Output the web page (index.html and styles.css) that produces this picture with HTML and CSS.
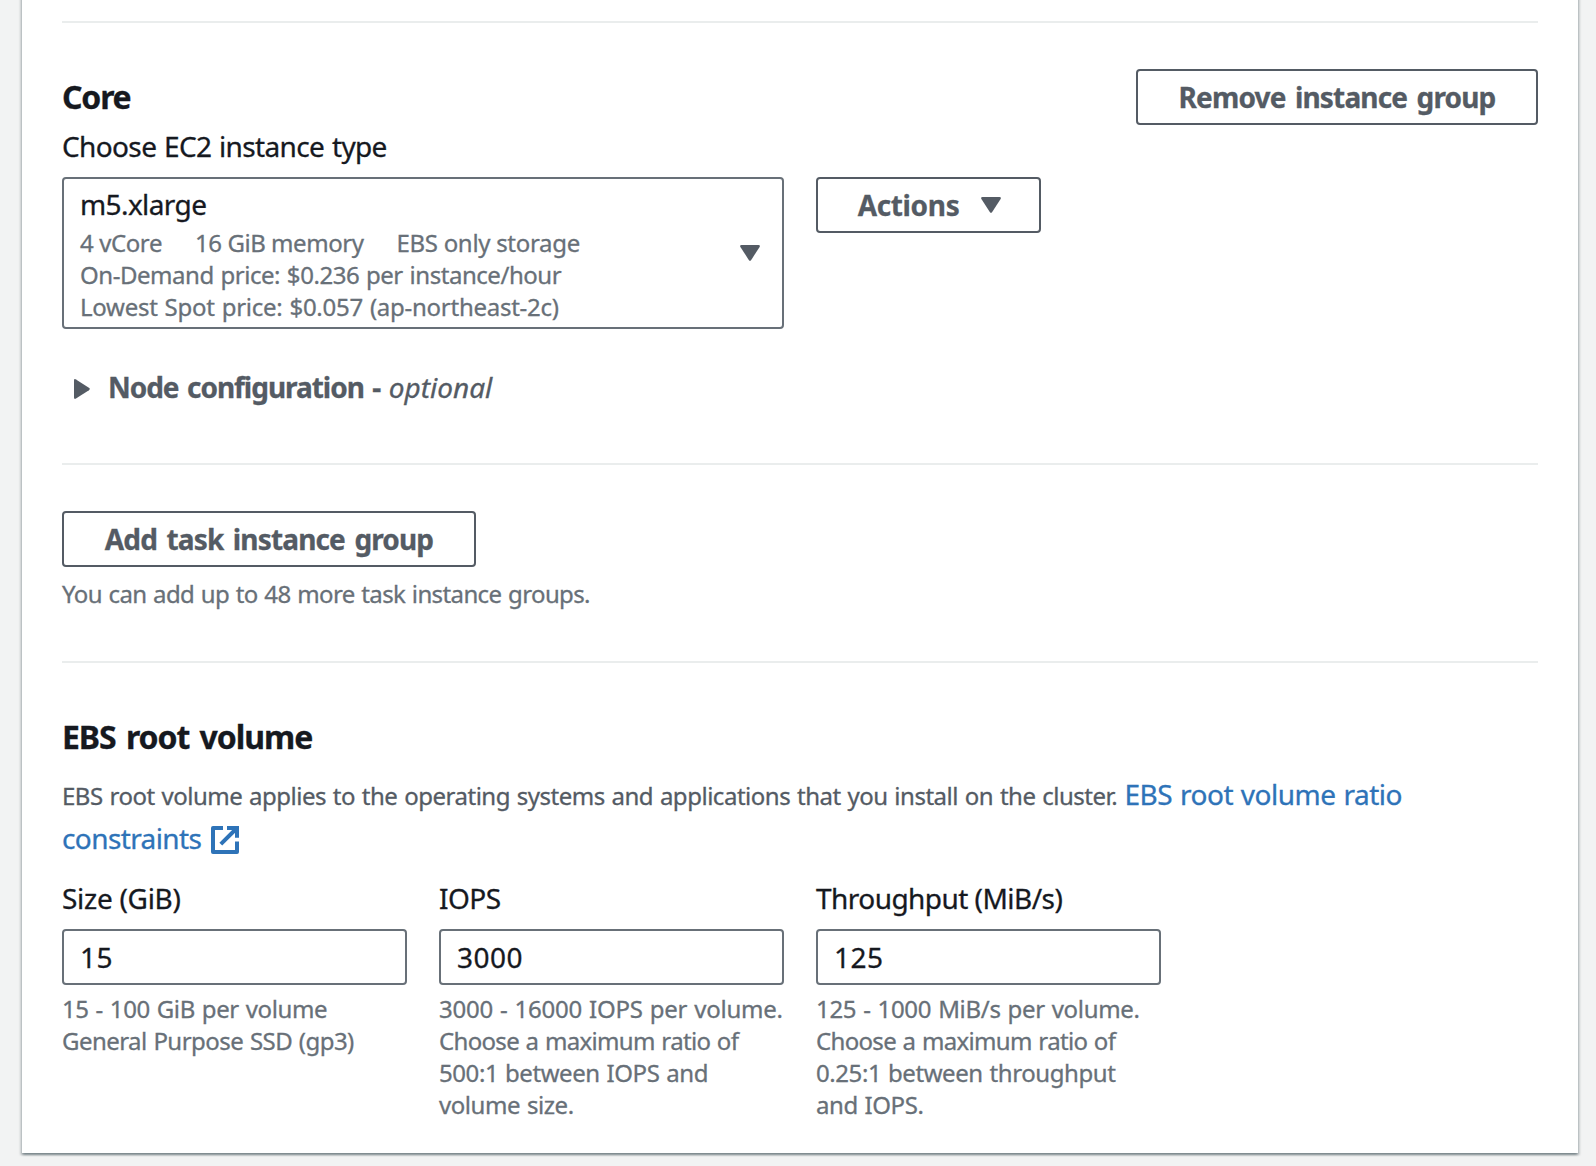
FILE: index.html
```html
<!DOCTYPE html>
<html lang="en">
<head>
<meta charset="utf-8">
<title>Cluster configuration</title>
<link rel="stylesheet" href="styles.css">
</head>
<body>
<main class="card">
  <section class="section core">
    <div class="header">
      <h3 class="title title-core">Core</h3>
      <button class="button remove">Remove instance group</button>
    </div>
    <div class="label type-label">Choose EC2 instance type</div>
    <div class="grid">
      <div class="select">
        <div class="select-body">
          <div class="value">m5.xlarge</div>
          <div class="specs"><span class="s1">4 vCore</span><span class="s2">16 GiB memory</span><span class="s3">EBS only storage</span></div>
          <div class="price">On-Demand price: $0.236 per instance/hour</div>
          <div class="spot">Lowest Spot price: $0.057 (ap-northeast-2c)</div>
        </div>
        <svg class="caret" viewBox="0 0 20 16"><path d="M1.500 0h17q2 0 1.100 2L11.200 14.900q-1.200 1.800-2.400 0L.4 2Q-.5 0 1.500 0z"/></svg>
      </div>
      <button class="button actions"><span>Actions</span><svg class="caret" viewBox="0 0 20 16"><path d="M1.500 0h17q2 0 1.100 2L11.200 14.900q-1.200 1.800-2.400 0L.4 2Q-.5 0 1.500 0z"/></svg></button>
    </div>
    <div class="expander">
      <svg class="triangle" viewBox="0 0 16 20"><path d="M0 1.500v17q0 2 2 1.100L14.900 11.200q1.800-1.200 0-2.400L2 .4Q0-.5 0 1.500z"/></svg>
      <span class="node">Node configuration - </span><em>optional</em>
    </div>
  </section>

  <section class="section tasks">
    <button class="button add">Add task instance group</button>
    <p class="hint add-hint">You can add up to 48 more task instance groups.</p>
  </section>

  <section class="section ebs">
    <h3 class="title">EBS root volume</h3>
    <p class="description"><span class="text">EBS root volume applies to the operating systems and applications that you install on the cluster.</span> <a class="link"><span class="ratio">EBS root volume ratio</span><br><span class="constraints">constraints</span><svg class="external" viewBox="0 0 16 16"><path d="M14 8.800V14H2V2h5"/><path class="arrow" d="M9 2h5v4.900M5.900 10.100L14 2"/></svg></a></p>
    <div class="grid">
      <div class="field">
        <label class="label size" for="size">Size (GiB)</label>
        <input id="size" class="input" value="15">
        <p class="hint"><span class="h1">15 - 100 GiB per volume</span><br><span class="h2">General Purpose SSD (gp3)</span></p>
      </div>
      <div class="field">
        <label class="label" for="iops">IOPS</label>
        <input id="iops" class="input" value="3000">
        <p class="hint"><span class="h3">3000 - 16000 IOPS per volume.</span><br><span class="h4">Choose a maximum ratio of</span><br>500:1 between IOPS and<br>volume size.</p>
      </div>
      <div class="field">
        <label class="label throughput" for="throughput">Throughput (MiB/s)</label>
        <input id="throughput" class="input" value="125">
        <p class="hint"><span class="h5">125 - 1000 MiB/s per volume.</span><br><span class="h4">Choose a maximum ratio of</span><br>0.25:1 between throughput<br>and IOPS.</p>
      </div>
    </div>
  </section>
</main>
</body>
</html>
```
FILE: styles.css
```css
* { box-sizing: border-box; }
body {
  margin: 0;
  height: 1166px;
  overflow: hidden;
  background: #f2f3f3;
  color: #16191f;
  font: 28px/44px "Noto Sans", "Open Sans", sans-serif;
  -webkit-text-stroke: .3px;
}
p, h3 { margin: 0; }
.card {
  width: 1556px;
  height: 1173px;
  margin: -20px 0 0 22px;
  padding: 41px 40px 0;
  background: #fff;
  box-shadow: 0 2px 2px rgba(0, 28, 36, .3), 2px 2px 2px rgba(0, 28, 36, .15), -2px 2px 2px rgba(0, 28, 36, .15);
}
.section { border-top: 2px solid #eaeded; }
.core { height: 442px; padding-top: 46px; }
.tasks { height: 198px; padding-top: 46px; }
.ebs { padding-top: 54px; }

.header { display: flex; justify-content: space-between; height: 56px; }
.title { font-size: 32px; line-height: 40px; font-weight: 700; letter-spacing: -1.05px; word-spacing: 3px; }
.title-core { line-height: 56px; letter-spacing: -1.2px; }

.button {
  display: flex;
  align-items: center;
  justify-content: center;
  height: 56px;
  padding: 0 0 1px;
  border: 2px solid #545b64;
  border-radius: 4px;
  background: #fff;
  color: #545b64;
  font: 700 28px/44px "Noto Sans", "Open Sans", sans-serif;
  word-spacing: 3px;
}
.remove { width: 402px; letter-spacing: -.84px; }
.add { width: 414px; letter-spacing: -.85px; }
.actions { width: 225px; padding-left: 2px; gap: 22px; letter-spacing: -.34px; }

.label { display: block; line-height: 44px; letter-spacing: -.5px; }
.type-label { line-height: 42px; margin-bottom: 10px; letter-spacing: -.63px; word-spacing: 1px; }
.size { letter-spacing: -.28px; }
.throughput { letter-spacing: -.54px; }

.grid { display: grid; grid-template-columns: repeat(4, 345px); gap: 32px; }
.select {
  grid-column: span 2;
  display: flex;
  align-items: center;
  justify-content: space-between;
  height: 152px;
  padding: 0 22px 0 16px;
  border: 2px solid #687078;
  border-radius: 4px;
}
.select-body { padding-bottom: 3px; color: #687078; font-size: 24px; line-height: 32px; }
.value { position: relative; top: 1px; color: #16191f; font-size: 28px; line-height: 47px; letter-spacing: -.6px; }
.specs { display: flex; gap: 33px; }
.s1 { letter-spacing: -.4px; }
.s2 { letter-spacing: -.45px; }
.s3 { letter-spacing: -.3px; }
.price { letter-spacing: -.46px; word-spacing: 1px; }
.spot { letter-spacing: -.26px; word-spacing: 1px; }
.caret { width: 20px; height: 16px; fill: #545b64; }
.triangle { width: 16px; height: 20px; margin: 3px 18px 0 12px; fill: #545b64; }

.expander { display: flex; align-items: center; margin-top: 36px; color: #545b64; }
.node { font-weight: 700; letter-spacing: -1.03px; word-spacing: 2.2px; white-space: pre; }

.hint { margin-top: 8px; color: #687078; font-size: 24px; line-height: 32px; letter-spacing: -.43px; word-spacing: 1px; white-space: nowrap; }
.add-hint { margin-top: 11px; letter-spacing: -.62px; }
.h1 { letter-spacing: -.37px; }
.h2 { letter-spacing: -.54px; }
.h3 { letter-spacing: -.23px; }
.h4 { letter-spacing: -.67px; }
.h5 { letter-spacing: -.31px; }

.description { margin: 15px 0 16px; }
.text { color: #545b64; font-size: 24px; line-height: 32px; letter-spacing: -.48px; word-spacing: 1px; }
.link { color: #2e73b8; }
.ratio { letter-spacing: -.48px; word-spacing: 1px; }
.constraints { letter-spacing: -.6px; }
.external { width: 32px; height: 32px; margin: -8px 0 -8px 8px; vertical-align: 1px; fill: none; stroke: #2e73b8; stroke-width: 2; stroke-linejoin: round; }
.arrow { stroke-linejoin: miter; }

.input {
  display: block;
  width: 100%;
  height: 56px;
  margin-top: 9px;
  padding: 0 16px;
  border: 2px solid #687078;
  border-radius: 4px;
  background: #fff;
  color: #16191f;
  font: 28px/44px "Noto Sans", "Open Sans", sans-serif;
  letter-spacing: .5px;
}
```
